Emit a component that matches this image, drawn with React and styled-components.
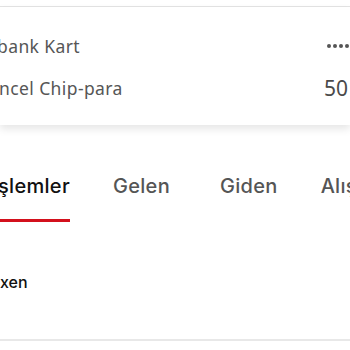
import React from "react";
import styled, { createGlobalStyle } from "styled-components";

const GlobalStyle = createGlobalStyle`
  html, body {
    margin: 0;
    padding: 0;
    background: #ffffff;
    overflow: hidden;
  }
  body {
    width: 350px;
    height: 350px;
    font-family: "Noto Sans", sans-serif;
  }
`;

const Page = styled.div`
  display: flex;
  flex-direction: column;
  width: 350px;
  height: 350px;
  background: #ffffff;
`;

const TopGap = styled.div`
  height: 6px;
  background: #ffffff;
  border-bottom: 1px solid #e4e4e4;
`;

const Card = styled.div`
  display: flex;
  flex-direction: column;
  background: #ffffff;
  padding: 18px 0 16px;
  box-shadow: 0 4px 8px rgba(0, 0, 0, 0.1);
  position: relative;
  z-index: 1;
`;

const Row = styled.div`
  display: flex;
  align-items: center;
  height: 42px;
`;

const Label = styled.span`
  flex: 1;
  min-width: 0;
  font-family: "Noto Sans", sans-serif;
  font-size: 17.5px;
  letter-spacing: 0.4px;
  color: #565656;
  white-space: nowrap;
  margin-left: ${(p) => p.$shift || 0}px;
`;

const Value = styled.span`
  width: ${(p) => p.$w}px;
  font-family: "Noto Sans", sans-serif;
  font-size: ${(p) => p.$size}px;
  color: #4a4a4a;
  white-space: nowrap;
  overflow: hidden;
`;

const Masked = styled.span`
  width: 23px;
  display: flex;
  gap: 2px;
  align-items: center;
  overflow: hidden;
`;

const Dot = styled.i`
  flex: none;
  width: 4px;
  height: 4px;
  border-radius: 50%;
  background: #555555;
`;

const Section = styled.div`
  flex: 1;
  margin-top: 10px;
  display: flex;
  flex-direction: column;
  border-bottom: 2px solid #e8e8e8;
  margin-bottom: 9px;
`;

const TabBar = styled.div`
  display: flex;
  padding-top: 40px;
  white-space: nowrap;
`;

const Tab = styled.div`
  font-family: "Inter", "Roboto", sans-serif;
  font-weight: 500;
  font-size: 20px;
  letter-spacing: 0.3px;
  line-height: 22px;
  color: ${(p) => (p.$active ? "#111111" : "#555555")};
  padding-bottom: 22px;
  border-bottom: 3px solid ${(p) => (p.$active ? "#d3101c" : "transparent")};
  margin-left: ${(p) => p.$ml || 0}px;
  margin-right: ${(p) => p.$mr || 0}px;
`;

const Note = styled.div`
  margin-top: 50px;
  font-family: "Inter", "Roboto", sans-serif;
  font-weight: 500;
  font-size: 16px;
  line-height: 20px;
  color: #111111;
  white-space: nowrap;
`;

export default function App() {
  return (
    <>
      <GlobalStyle />
      <Page>
        <TopGap />
        <Card>
          <Row>
            <Label $shift={-3}>bank Kart</Label>
            <Masked aria-label="••••">
              <Dot />
              <Dot />
              <Dot />
              <Dot />
            </Masked>
          </Row>
          <Row>
            <Label $shift={-1}>ncel Chip-para</Label>
            <Value $w={26} $size={21}>50</Value>
          </Row>
        </Card>
        <Section>
          <TabBar>
            <Tab $active $ml={-2} $mr={43}>şlemler</Tab>
            <Tab $mr={50}>Gelen</Tab>
            <Tab $mr={43}>Giden</Tab>
            <Tab>Alış</Tab>
          </TabBar>
          <Note>xen</Note>
        </Section>
      </Page>
    </>
  );
}
